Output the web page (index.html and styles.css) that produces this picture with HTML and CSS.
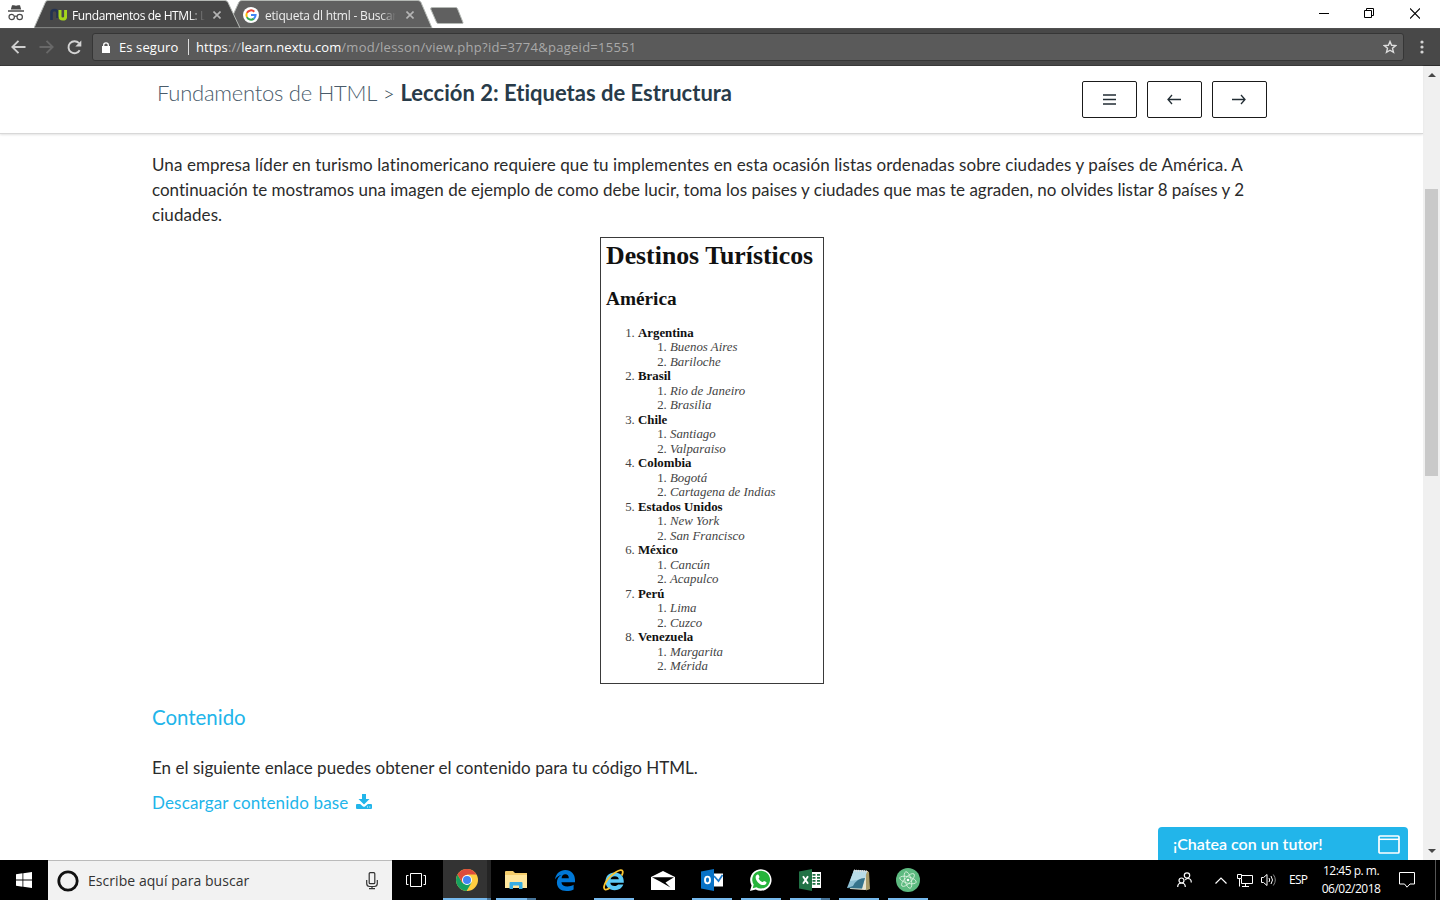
FILE: index.html
```
<!DOCTYPE html>
<html lang="es">
<head>
<meta charset="utf-8">
<title>Fundamentos de HTML</title>
<link rel="stylesheet" href="styles.css">
</head>
<body>
<header class="tabstrip">
  <svg class="incognito" width="18" height="18" viewBox="0 0 18 18"><path d="M5 1.2h2l2 .6 2-.6h2l1.2 4.3H3.800z" fill="#4a4a4a"/><path d="M1 7h16" stroke="#4a4a4a" stroke-width="1.500"/><g fill="none" stroke="#4a4a4a" stroke-width="1.200"><circle cx="4.700" cy="13" r="2.700"/><circle cx="12.700" cy="13" r="2.700"/><path d="M7.400 12.600q1.300-1 2.600 0"/></g></svg>
  <div class="tab tab-active">
    <svg class="tab-shape" width="208" height="28" viewBox="0 0 208 28"><path d="M0 28L11.500 2Q12 .5 14 .5H191Q193 .5 194 2.500L206 28z" fill="#484848" stroke="#b4b8b4"/></svg>
    <svg class="favicon" width="17" height="14" viewBox="0 0 17 14"><path d="M1.500 12V5q0-3 3-3t3 3v5" fill="none" stroke="#243352" stroke-width="2.600"/><path d="M10 2v6.500q0 2.500 2.800 2.500t2.800-2.500V2" fill="none" stroke="#a4d51c" stroke-width="3"/></svg>
    <span class="tab-title title-one">Fundamentos de HTML: L</span>
    <svg class="tab-close" width="8" height="8" viewBox="0 0 8 8"><path d="M.5.5l7 7M7.500.5l-7 7" stroke="#b5b5b5" stroke-width="1.600"/></svg>
  </div>
  <div class="tab tab-second">
    <svg class="tab-shape" width="200" height="28" viewBox="0 0 200 28"><path d="M0 15L6 2Q7 .5 9 .5H185Q187 .5 188 2.500L199 28H6z" fill="#606060" stroke="#b4b8b4"/></svg>
    <svg class="favicon" width="16" height="16" viewBox="0 0 16 16"><circle cx="8" cy="8" r="8" fill="#fff"/><g fill="none" stroke-width="2"><path d="M11.300 4.700A4.600 4.600 0 0 0 3.900 5.900" stroke="#ea4335"/><path d="M3.900 5.900a4.600 4.600 0 0 0 0 4.200" stroke="#fbbc05"/><path d="M3.900 10.100a4.600 4.600 0 0 0 7 1.500" stroke="#34a853"/><path d="M10.900 11.600A4.600 4.600 0 0 0 12.600 8H8" stroke="#4285f4"/></g></svg>
    <span class="tab-title title-two">etiqueta dl html - Buscar</span>
    <svg class="tab-close" width="8" height="8" viewBox="0 0 8 8"><path d="M.5.5l7 7M7.500.5l-7 7" stroke="#b5b5b5" stroke-width="1.600"/></svg>
  </div>
  <svg class="newtab" width="34" height="17" viewBox="0 0 34 17"><path d="M2.500.5H25.500q1.500 0 2 1.200L33 15.500Q33.300 16.500 32 16.500H8.500q-1.500 0-2-1.200L.7 2Q.2.5 2.500.5z" fill="#606060" stroke="#b4b8b4"/></svg>
  <div class="window-controls">
    <svg class="minimize" width="10" height="11" viewBox="0 0 10 11"><path d="M0 5.500h10" stroke="#000"/></svg>
    <svg width="10" height="11" viewBox="0 0 10 11"><path d="M.5 2.500h7v7h-7zM2.500 2V.5h7v7H8" fill="none" stroke="#000"/></svg>
    <svg width="10" height="11" viewBox="0 0 10 11"><path d="M0 .5l10 10M10 .5l-10 10" stroke="#000" stroke-width="1.100"/></svg>
  </div>
</header>
<div class="toolbar">
  <svg class="nav-back" width="15" height="14" viewBox="0 0 15 14"><path d="M14.500 7H1.500M7.500.8L1.300 7l6.200 6.200" fill="none" stroke="#cfcfcf" stroke-width="1.900"/></svg>
  <svg class="nav-next" width="15" height="14" viewBox="0 0 15 14"><path d="M.5 7h13M7.500.8L13.700 7l-6.200 6.200" fill="none" stroke="#686868" stroke-width="1.900"/></svg>
  <svg class="nav-reload" width="15" height="15" viewBox="0 0 15 15"><path d="M12.700 10.200A6 6 0 1 1 12 3.200" fill="none" stroke="#d4d4d4" stroke-width="1.900"/><path d="M14.300.5v6H8.300z" fill="#d4d4d4"/></svg>
  <div class="omnibox">
    <svg class="lock" width="8" height="11" viewBox="0 0 8 11"><path d="M0 4h8v7H0z" fill="#fff"/><path d="M1.700 4.500V3q0-2.200 2.300-2.200T6.300 3v1.500" fill="none" stroke="#fff" stroke-width="1.300"/></svg>
    <span class="secure">Es seguro</span>
    <span class="url"><span class="scheme">https</span>://<b>learn.nextu.com</b><span class="path">/mod/lesson/view.php?id=3774&amp;pageid=15551</span></span>
    <svg class="star" width="14" height="14" viewBox="0 0 14 14"><path d="M7 1.500l1.600 3.800 4.100.3-3.200 2.700 1 4L7 10.200l-3.500 2.100 1-4L1.300 5.600l4.100-.3z" fill="none" stroke="#ddd" stroke-width="1.400"/></svg>
  </div>
  <svg class="dots" width="4" height="14" viewBox="0 0 4 14" fill="#d4d4d4"><circle cx="2" cy="2" r="1.600"/><circle cx="2" cy="7" r="1.600"/><circle cx="2" cy="12" r="1.600"/></svg>
</div>
<div class="viewport">
  <main class="page">
    <div class="lesson-bar">
      <h1 class="crumb"><span class="course">Fundamentos de HTML</span><span class="sep">&gt;</span><span class="lesson">Lección 2: Etiquetas de Estructura</span></h1>
      <nav class="lesson-nav">
        <a class="nav-button"><svg width="13" height="11" viewBox="0 0 13 11"><path d="M0 1h13M0 5.500h13M0 10h13" stroke="#222d34" stroke-width="1.500"/></svg></a>
        <a class="nav-button"><svg class="arrow" width="14" height="11" viewBox="0 0 14 11"><path d="M14 5.500H1M5 1L1 5.500 5 10" fill="none" stroke="#222d34" stroke-width="1.300"/></svg></a>
        <a class="nav-button"><svg class="arrow" width="14" height="11" viewBox="0 0 14 11"><path d="M0 5.500h13M9 1l4 4.500L9 10" fill="none" stroke="#222d34" stroke-width="1.300"/></svg></a>
      </nav>
    </div>
    <article class="content">
      <p class="intro"><span class="l1">Una empresa líder en turismo latinomericano requiere que tu implementes en esta ocasión listas ordenadas sobre ciudades y países de América. A</span><br><span class="l2">continuación te mostramos una imagen de ejemplo de como debe lucir, toma los paises y ciudades que mas te agraden, no olvides listar 8 países y 2</span><br>ciudades.</p>
      <section class="sample">
        <h2 class="sample-title">Destinos Turísticos</h2>
        <h3 class="sample-region">América</h3>
        <ol class="countries">
          <li><b>Argentina</b><ol><li><i>Buenos Aires</i></li><li><i>Bariloche</i></li></ol></li>
          <li><b>Brasil</b><ol><li><i>Rio de Janeiro</i></li><li><i>Brasilia</i></li></ol></li>
          <li><b>Chile</b><ol><li><i>Santiago</i></li><li><i>Valparaiso</i></li></ol></li>
          <li><b>Colombia</b><ol><li><i>Bogotá</i></li><li><i>Cartagena de Indias</i></li></ol></li>
          <li><b>Estados Unidos</b><ol><li><i>New York</i></li><li><i>San Francisco</i></li></ol></li>
          <li><b>México</b><ol><li><i>Cancún</i></li><li><i>Acapulco</i></li></ol></li>
          <li><b>Perú</b><ol><li><i>Lima</i></li><li><i>Cuzco</i></li></ol></li>
          <li><b>Venezuela</b><ol><li><i>Margarita</i></li><li><i>Mérida</i></li></ol></li>
        </ol>
      </section>
      <h2 class="subhead">Contenido</h2>
      <p class="note">En el siguiente enlace puedes obtener el contenido para tu código HTML.</p>
      <a class="download"><span>Descargar contenido base</span><svg width="16" height="15" viewBox="0 0 16 15"><path d="M6 0h4v5h3.500L8 10.500 2.500 5H6z" fill="#22b5ea"/><path d="M1 10h3.200L7 12.500q1 .7 2 0L11.800 10H15q1 0 1 1v3q0 1-1 1H1q-1 0-1-1v-3q0-1 1-1z" fill="#22b5ea"/><path d="M11 13h1M13.300 13h1" stroke="#fff"/></svg></a>
    </article>
    <aside class="chat"><span>¡Chatea con un tutor!</span><svg width="22" height="19" viewBox="0 0 22 19"><rect x="1" y="1" width="20" height="17" rx="1" fill="none" stroke="#fff" stroke-width="1.700"/><path d="M1 4.300h20" stroke="#fff" stroke-width="1.500"/></svg></aside>
  </main>
  <div class="scrollbar">
    <svg width="8" height="4" viewBox="0 0 8 4"><path d="M0 4l4-4 4 4z" fill="#484848"/></svg>
    <div class="thumb"></div>
    <svg class="arrow-down" width="8" height="4" viewBox="0 0 8 4"><path d="M0 0l4 4 4-4z" fill="#484848"/></svg>
  </div>
</div>
<footer class="taskbar">
  <div class="start"><svg width="16" height="16" viewBox="0 0 16 16" fill="#fff"><path d="M0 2.200L6.500 1.300V7.600H0zM7.300 1.200L16 0v7.600H7.300zM0 8.400h6.500v6.300L0 13.800zM7.300 8.400H16V16l-8.700-1.200z"/></svg></div>
  <div class="search">
    <svg width="22" height="22" viewBox="0 0 22 22"><circle cx="11" cy="11" r="9.200" fill="none" stroke="#111" stroke-width="2.800"/></svg>
    <span>Escribe aquí para buscar</span>
    <svg class="mic" width="12" height="18" viewBox="0 0 12 18"><g fill="none" stroke="#333" stroke-width="1.200"><rect x="3.200" y=".7" width="5.600" height="11" rx="1"/><path d="M.7 8v3.500q0 3 3 3h4.600q3 0 3-3V8M6 14.500V17M3 16.700h6"/></g></svg>
  </div>
  <div class="app task-view"><svg width="20" height="14" viewBox="0 0 20 14"><path d="M4.500.5h11v13h-11zM2.500 2.500h-2v9h2M17.500 2.500h2v9h-2" fill="none" stroke="#fff"/></svg></div>
  <div class="app chrome-app open"><svg width="22" height="22" viewBox="0 0 22 22"><circle cx="11" cy="11" r="11" fill="#ffcd40"/><path d="M1.500 5.500A11 11 0 0 0 10.500 22L15.500 13.800 11 11 6.500 14z" fill="#16a05f"/><path d="M1.500 5.500A11 11 0 0 1 20.500 5.500H11L6.500 14z" fill="#de4b3c"/><circle cx="11" cy="11" r="5" fill="#fff"/><circle cx="11" cy="11" r="4" fill="#4284f3"/></svg></div>
  <div class="app open stacked"><svg width="22" height="18" viewBox="0 0 22 18"><path d="M0 1q0-1 1-1h7l2 2h12v15H0z" fill="#f5cd6b"/><path d="M0 4h22v13H0z" fill="#ffe69c"/><path d="M4.500 18v-6q0-1 1-1h11q1 0 1 1v6H14v-3.500H8V18z" fill="#37ade2"/></svg></div>
  <div class="app"><svg width="20" height="21" viewBox="0 0 20 21"><path d="M0 9.500C1 3.500 5 0 10.300 0 16.500 0 20 4.500 20 10v2.200H6.400c.3 3 2.700 4.300 6 4.300 2.300 0 4.500-.7 6.200-1.700v4.600c-2 1-4.300 1.600-7 1.600-6 0-9.700-3.500-9.700-8.500 0-3.200 1.600-6 4.500-7.500C3.800 5.400 1.600 7 0 9.500zm6.600-1.200h7.200c0-2.500-1.300-4-3.500-4s-3.500 1.500-3.700 4z" fill="#0078d7"/></svg></div>
  <div class="app open"><svg width="22" height="22" viewBox="0 0 22 22"><path fill-rule="evenodd" d="M20.800 13.700H7.300c.3 2.200 1.900 3.300 4.300 3.300 1.600 0 2.800-.6 3.500-1.500h5.200c-1.200 3.500-4.300 5.700-8.600 5.700C6 21.200 2.500 17.700 2.500 12.500S6 3.500 11.700 3.500c5.500 0 9.400 3.500 9.100 10.200zM7.600 10.300h8.200c-.2-1.800-1.700-3-4-3-2.200 0-3.800 1.100-4.200 3z" fill="#5ccbf7"/><path d="M18.800 6.500C20.500 3 20 .8 17.600 1.100 12 2 3 10.500 1.200 17c-1 4.300 2 4.400 5.500 2" fill="none" stroke="#fbc530" stroke-width="1.800"/></svg></div>
  <div class="app"><svg width="24" height="19" viewBox="0 0 24 19"><path d="M0 6L12 0l12 6v13H0z" fill="#fff"/><path d="M1 6.200h22L14.500 11.500l5 5L9 10.500z" fill="#000"/></svg></div>
  <div class="app open"><svg width="22" height="22" viewBox="0 0 22 22"><path d="M12 4.500h10v13H12z" fill="#fff"/><path d="M13 7l4.500 5L21.500 6" fill="none" stroke="#1976c8" stroke-width="1.700"/><path d="M0 2.500L13 0v22L0 19.500z" fill="#0872c6"/><ellipse cx="6.500" cy="11" rx="2.500" ry="3.400" fill="none" stroke="#fff" stroke-width="1.900"/></svg></div>
  <div class="app open"><svg width="22" height="22" viewBox="0 0 22 22"><path d="M0 22l1.600-5.600A10.700 10.700 0 1 1 5.700 20.400z" fill="#fff"/><path d="M2.700 19.300l1-3.700A8.900 8.900 0 1 1 6.500 18.300z" fill="#26b43b"/><path d="M7 5.800c.8-.5 1.500-.4 1.800.4l.7 1.700c.2.700-1 1.300-.8 1.800.8 1.600 2 2.700 3.700 3.400.7.200 1.200-1.300 1.700-1.200l2.200 1.100c.5.300-.1 2-1 2.600-2.500 1.400-5.300-.3-7.300-2.200C5.800 11 4.500 7.500 7 5.800z" fill="#fff"/></svg></div>
  <div class="app open stacked"><svg width="22" height="22" viewBox="0 0 22 22"><path d="M12 3h10v16H12z" fill="#fff"/><path d="M13.500 5h3v1.700h-3zM18 5h3v1.700h-3zM13.500 8h3v1.700h-3zM18 8h3v1.700h-3zM13.500 11h3v1.700h-3zM18 11h3v1.700h-3zM13.500 14h3v1.700h-3zM18 14h3v1.700h-3z" fill="#207245"/><path d="M0 2.500L13 0v22L0 19.500z" fill="#207245"/><path d="M4 7.300l5 7.400M9 7.300l-5 7.400" stroke="#fff" stroke-width="1.900"/></svg></div>
  <div class="app open"><svg width="24" height="22" viewBox="0 0 24 22"><path d="M7 1l14 1 1 18-4 1L3 20z" fill="#e8e4cf"/><path d="M19 2l3 1 1 17-4 1.500z" fill="#a99b68"/><path d="M7 1l13 1-5 17.500L0 19z" fill="#8fc0d4"/><path d="M7 1l13 1-2 7-8 2-7 1z" fill="#b8dce7"/><path d="M0 19l15 .5L18 9q-8 0-12 8z" fill="#36738b"/><path d="M7 1.500l13 1" stroke="#ddd" stroke-dasharray="1 1" stroke-width="2"/></svg></div>
  <div class="app open"><svg width="24" height="24" viewBox="0 0 24 24"><circle cx="12" cy="12" r="12" fill="#5dba80"/><g fill="none" stroke="#d3efd9" stroke-width=".9"><ellipse cx="12" cy="12" rx="8.500" ry="3.200" transform="rotate(15 12 12)"/><ellipse cx="12" cy="12" rx="8.500" ry="3.200" transform="rotate(75 12 12)"/><ellipse cx="12" cy="12" rx="8.500" ry="3.200" transform="rotate(135 12 12)"/></g><circle cx="12" cy="12" r="1.300" fill="#fff"/></svg></div>
  <div class="tray">
    <svg class="people" width="15" height="16" viewBox="0 0 15 16"><g fill="none" stroke="#fff" stroke-width="1.200"><circle cx="10" cy="3.500" r="2.700"/><circle cx="4.500" cy="8.500" r="2.500"/><path d="M.7 15q0-4 3.800-4t3.800 4M8.300 8q1-1.500 2.500-1.500 3.500 0 3.500 4"/></g></svg>
    <svg class="chevron" width="12" height="7" viewBox="0 0 12 7"><path d="M.5 6.500L6 1l5.500 5.500" fill="none" stroke="#fff" stroke-width="1.200"/></svg>
    <svg class="network" width="16" height="13" viewBox="0 0 16 13"><path d="M5 1.500h10.500v8H4.500V5M.5.5h4v4h-4zM2.500 5v7.500M5 12.500h7M8.500 9.500v3" fill="none" stroke="#fff"/></svg>
    <svg class="volume" width="16" height="14" viewBox="0 0 16 14"><path d="M.5 4.500h2L6 1.500v11L2.500 9.500h-2zM8 5q1.300 2 0 4M10 3q3 4 0 8" fill="none" stroke="#fff"/><path d="M12.300 1.500q4 5.500 0 11" fill="none" stroke="#888"/></svg>
    <span class="lang">ESP</span>
    <div class="clock"><span class="time">12:45 p. m.</span><span class="date">06/02/2018</span></div>
    <svg class="action" width="16" height="16" viewBox="0 0 16 16"><path d="M.5.5h15v11.500H11L8 15.200 5.500 12H.5z" fill="none" stroke="#fff"/></svg>
    <div class="peek"></div>
  </div>
</footer>
</body>
</html>
```
FILE: styles.css
```
* { box-sizing: border-box; }
body { margin: 0; width: 1440px; height: 900px; overflow: hidden; display: flex; flex-direction: column; background: #fff; font-family: "Open Sans", "Noto Sans", sans-serif; font-variant-ligatures: none; }
svg { display: block; flex: none; }
h1, h2, h3, p, ol { margin: 0; font-weight: normal; }

.tabstrip { flex: none; height: 28px; display: flex; align-items: flex-start; background: #fff; }
.incognito { margin: 4px 0 0 7px; }
.tab { position: relative; height: 28px; display: flex; align-items: center; flex: none; padding-top: 2px; }
.tab-active { width: 208px; margin-left: 9px; padding-left: 16px; z-index: 1; }
.tab-second { width: 200px; margin-left: -9px; padding-left: 10px; z-index: 0; }
.tab-shape { position: absolute; left: 0; top: 0; z-index: -1; }
.tab-title { margin-left: 5px; flex: none; overflow: hidden; white-space: nowrap; color: #fff; font-size: 12px; letter-spacing: -0.4px; -webkit-mask-image: linear-gradient(90deg, #000 88%, transparent); }
.title-one { width: 133px; }
.title-two { width: 131px; margin-left: 6px; color: #eee; letter-spacing: -0.2px; }
.tab-close { margin-left: 8px; }
.title-two + .tab-close { margin-left: 10px; }
.newtab { margin: 7px 0 0 -3px; }
.window-controls { display: flex; gap: 36px; margin: 8px 20px 0 auto; }
.minimize { margin-right: -1px; }

.toolbar { flex: none; height: 38px; display: flex; align-items: center; background: #484848; border-top: 1px solid #505050; border-bottom: 1px solid #2d2d2d; padding-left: 11px; }
.nav-next { margin-left: 13px; }
.nav-reload { margin-left: 13px; }
.omnibox { width: 1312px; height: 28px; margin-left: 10px; display: flex; align-items: center; background: #5a5a5a; border: 1px solid #363636; border-radius: 3px; font-size: 13px; color: #fff; }
.lock { margin-left: 9px; }
.secure { width: 70px; margin-left: 9px; line-height: 16px; border-right: 1px solid #ddd; white-space: nowrap; letter-spacing: 0.1px; }
.url { margin-left: 7px; color: #a9a9a9; white-space: nowrap; letter-spacing: 0.100px; }
.url b, .scheme { color: #fff; font-weight: normal; }
.path { letter-spacing: 0.270px; }
.star { margin: 0 6px 0 auto; }
.dots { margin-left: 16px; }

.viewport { flex: none; height: 794px; display: flex; }
.page { position: relative; width: 1423px; background: #fff; font-family: Lato, sans-serif; }
.lesson-bar { height: 68px; padding: 0 156px 0 157px; display: flex; justify-content: space-between; border-bottom: 1px solid #d8d8d8; box-shadow: 0 1px 2px #e4e4e4; }
.crumb { display: flex; align-items: baseline; padding-top: 13px; font-size: 22px; line-height: 28px; color: #283b49; white-space: nowrap; }
.course { width: 220px; font-weight: 300; letter-spacing: -0.240px; color: #4a5c6b; }
.sep { width: 23.500px; padding-left: 6px; font-weight: 300; font-size: 20px; }
.lesson { font-weight: 700; letter-spacing: 0.010px; }
.lesson-nav { display: flex; gap: 10px; padding-top: 15px; }
.nav-button { width: 55px; height: 37px; display: flex; align-items: center; justify-content: center; border: 1px solid #1a1a1a; border-radius: 2px; }
.arrow { margin-right: 1px; }
.content { padding: 18px 152px 0; color: #2b2b2b; font-size: 17px; line-height: 25px; display: flex; flex-direction: column; align-items: flex-start; white-space: nowrap; }
.intro { letter-spacing: 0.070px; }
.l1 { letter-spacing: 0.085px; }
.l2 { letter-spacing: -0.004px; }
.sample { align-self: center; width: 224px; height: 447px; margin-top: 10px; padding-left: 5.500px; border: 1px solid #3a3a3a; font-family: "Liberation Serif", serif; color: #111; }
.sample-title { margin-top: 3px; font-size: 25.800px; line-height: 30px; font-weight: 700; }
.sample-region { margin-top: 17px; font-size: 19.300px; line-height: 22px; font-weight: 700; }
.countries { margin-top: 16px; font-size: 12.850px; line-height: 14.480px; }
.sample ol { padding-left: 32px; }
.countries i { color: #444; }
.countries li::marker { color: #444; }
.subhead { margin-top: 20px; font-size: 20.450px; line-height: 26px; color: #22b5ea; }
.note { margin-top: 25px; letter-spacing: 0.025px; }
.download { margin-top: 10px; display: flex; align-items: center; gap: 7.500px; color: #22b5ea; letter-spacing: 0.160px; }
.download svg { margin-top: -2px; }
.chat { position: absolute; left: 1158px; bottom: 0; width: 250px; height: 33px; padding: 0 8px 0 15px; display: flex; align-items: center; justify-content: space-between; background: #22b5ea; border-radius: 4px 4px 0 0; color: #fff; font-size: 16px; font-weight: 600; white-space: nowrap; }
.chat span { margin-top: -1px; }
.chat svg { margin-top: 1px; }
.scrollbar { width: 17px; background: #f0f0f0; display: flex; flex-direction: column; align-items: center; padding: 7px 0; }
.thumb { width: 13px; height: 287px; margin-top: 112px; background: #c9c9c9; }
.arrow-down { margin-top: auto; }

.taskbar { flex: none; height: 40px; display: flex; background: #000; color: #fff; }
.start { width: 48px; display: flex; align-items: center; justify-content: center; }
.search { width: 344px; display: flex; align-items: center; padding: 0 14px 0 9px; background: #f2f2f2; border-top: 1px solid #bbb; color: #333; font-size: 14px; white-space: nowrap; }
.search span { margin-left: 9px; letter-spacing: 0.050px; }
.mic { margin-left: auto; }
.app { position: relative; width: 49px; display: flex; align-items: center; justify-content: center; }
.task-view { width: 50px; padding-right: 2px; }
.open::after { content: ""; position: absolute; left: 5px; bottom: 0; width: 40px; height: 2px; background: #76b9ed; }
.stacked::after { background: linear-gradient(90deg, #76b9ed 31px, #47759a 31px); }
.chrome-app { background: linear-gradient(90deg, #000 1px, #333 1px, #333 45px, #242424 45px); }
.chrome-app::after { left: 1px; width: 48px; background: linear-gradient(90deg, #76b9ed 44px, #47759a 44px); }
.tray { margin-left: auto; display: flex; align-items: center; font-size: 12px; white-space: nowrap; }
.chevron { margin-left: 23px; }
.network { margin-left: 10px; }
.volume { margin-left: 8px; }
.lang { width: 19px; margin: -2px 0 0 12px; font-size: 12px; letter-spacing: -0.7px; }
.clock { width: 58px; margin-left: 14px; display: flex; flex-direction: column; align-items: center; line-height: 18px; letter-spacing: -0.5px; }
.action { margin-left: 19px; }
.peek { width: 5px; height: 40px; margin-left: 20px; border-left: 1px solid #555; }
```
